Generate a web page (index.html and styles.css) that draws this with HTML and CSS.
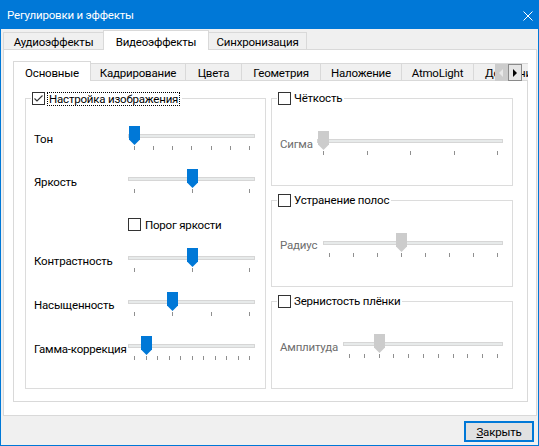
FILE: index.html
```html
<!DOCTYPE html>
<html lang="ru">
<head>
<meta charset="utf-8">
<title>Регулировки и эффекты</title>
<link rel="stylesheet" href="styles.css">
</head>
<body>
<div class="window">
  <div class="titlebar">
    <span class="title">Регулировки и эффекты</span>
    <svg class="close" width="10" height="10" viewBox="0 0 10 10"><path d="M0.5 0.5L9.5 9.5M9.5 0.5L0.5 9.5" stroke="#fff" stroke-width="1" fill="none"/></svg>
  </div>
  <div class="client">
    <div class="outer-tabs">
      <div class="tab ot1">Аудиоэффекты</div>
      <div class="tab ot2 active">Видеоэффекты</div>
      <div class="tab ot3">Синхронизация</div>
    </div>
    <div class="outer-panel">
      <div class="inner-strip">
        <div class="inner-tabs">
          <div class="tab it1 active">Основные</div>
          <div class="tab it2">Кадрирование</div>
          <div class="tab it3">Цвета</div>
          <div class="tab it4">Геометрия</div>
          <div class="tab it5">Наложение</div>
          <div class="tab it6">AtmoLight</div>
          <div class="tab it7">Дополнительно</div>
        </div>
        <div class="scroll-btns">
          <div class="sbtn disabled"><svg width="5" height="8" viewBox="0 0 5 8"><path d="M4 0L0 4L4 8Z" fill="#e8e8e8"/></svg></div>
          <div class="sbtn"><svg width="5" height="8" viewBox="0 0 5 8"><path d="M0 0L4 4L0 8Z" fill="#000"/></svg></div>
        </div>
      </div>
      <div class="inner-panel">
        <div class="group left-group">
          <div class="legend">
            <span class="check"><svg width="11" height="11" viewBox="0 0 11 11"><path d="M1.5 5.5L4 8L9.5 2.5" stroke="#333" stroke-width="1.1" fill="none"/></svg></span>
            <span class="focus">Настройка изображения</span>
          </div>
          <div class="row m1">
            <span class="lbl">Тон</span>
            <div class="slider">
              <div class="track"></div>
              <div class="ticks"><i></i><i></i><i></i><i></i><i></i><i></i><i></i></div>
              <svg class="thumb" style="--v:0" width="11" height="19" viewBox="0 0 11 19"><path d="M0 0H11V13.5L5.5 19L0 13.5Z" fill="#0078d7"/></svg>
            </div>
          </div>
          <div class="row m2">
            <span class="lbl">Яркость</span>
            <div class="slider">
              <div class="track"></div>
              <div class="ticks"><i></i><i></i><i></i></div>
              <svg class="thumb" style="--v:0.5" width="11" height="19" viewBox="0 0 11 19"><path d="M0 0H11V13.5L5.5 19L0 13.5Z" fill="#0078d7"/></svg>
            </div>
          </div>
          <div class="row chk-row">
            <span class="check"></span>
            <span>Порог яркости</span>
          </div>
          <div class="row m4">
            <span class="lbl">Контрастность</span>
            <div class="slider">
              <div class="track"></div>
              <div class="ticks"><i></i><i></i><i></i></div>
              <svg class="thumb" style="--v:0.5" width="11" height="19" viewBox="0 0 11 19"><path d="M0 0H11V13.5L5.5 19L0 13.5Z" fill="#0078d7"/></svg>
            </div>
          </div>
          <div class="row m5">
            <span class="lbl">Насыщенность</span>
            <div class="slider">
              <div class="track"></div>
              <div class="ticks"><i></i><i></i><i></i><i></i></div>
              <svg class="thumb" style="--v:0.333" width="11" height="19" viewBox="0 0 11 19"><path d="M0 0H11V13.5L5.5 19L0 13.5Z" fill="#0078d7"/></svg>
            </div>
          </div>
          <div class="row m5">
            <span class="lbl">Гамма-коррекция</span>
            <div class="slider">
              <div class="track"></div>
              <div class="ticks"><i></i><i></i><i></i><i></i><i></i><i></i><i></i><i></i><i></i><i></i><i></i></div>
              <svg class="thumb" style="--v:0.1" width="11" height="19" viewBox="0 0 11 19"><path d="M0 0H11V13.5L5.5 19L0 13.5Z" fill="#0078d7"/></svg>
            </div>
          </div>
        </div>
        <div class="right-col">
          <div class="group right-group">
            <div class="legend">
              <span class="check"></span>
              <span class="plain">Чёткость</span>
            </div>
            <div class="row rm">
              <span class="lbl dis w-sigma">Сигма</span>
              <div class="slider">
                <div class="track"></div>
                <div class="ticks"><i></i><i></i><i></i><i></i><i></i></div>
                <svg class="thumb" style="--v:0" width="11" height="19" viewBox="0 0 11 19"><path d="M0 0H11V13.5L5.5 19L0 13.5Z" fill="#cccccc"/></svg>
              </div>
            </div>
          </div>
          <div class="group right-group">
            <div class="legend">
              <span class="check"></span>
              <span class="plain">Устранение полос</span>
            </div>
            <div class="row rm">
              <span class="lbl dis w-rad">Радиус</span>
              <div class="slider">
                <div class="track"></div>
                <div class="ticks"><i></i><i></i><i></i><i></i><i></i><i></i><i></i><i></i></div>
                <svg class="thumb" style="--v:0.4286" width="11" height="19" viewBox="0 0 11 19"><path d="M0 0H11V13.5L5.5 19L0 13.5Z" fill="#cccccc"/></svg>
              </div>
            </div>
          </div>
          <div class="group right-group">
            <div class="legend">
              <span class="check"></span>
              <span class="plain">Зернистость плёнки</span>
            </div>
            <div class="row rm">
              <span class="lbl dis w-amp">Амплитуда</span>
              <div class="slider">
                <div class="track"></div>
                <div class="ticks"><i></i><i></i><i></i><i></i><i></i><i></i><i></i><i></i><i></i><i></i><i></i></div>
                <svg class="thumb" style="--v:0.2" width="11" height="19" viewBox="0 0 11 19"><path d="M0 0H11V13.5L5.5 19L0 13.5Z" fill="#cccccc"/></svg>
              </div>
            </div>
          </div>
        </div>
      </div>
    </div>
    <div class="footer">
      <button class="btn"><u>З</u>акрыть</button>
    </div>
  </div>
</div>
</body>
</html>
```
FILE: styles.css
```css
* { box-sizing: border-box; }
html, body { margin: 0; padding: 0; }
body {
  width: 539px;
  height: 446px;
  overflow: hidden;
  font-family: Roboto, "Noto Sans", sans-serif;
  font-size: 11.5px;
  letter-spacing: -0.2px;
  color: #000;
  background: #fff;
}
.window {
  width: 539px;
  height: 446px;
  border: 1px solid #0078d7;
  background: #f0f0f0;
  display: flex;
  flex-direction: column;
}
.titlebar {
  height: 28px;
  flex: none;
  background: #0078d7;
  color: #fff;
  display: flex;
  align-items: center;
  justify-content: space-between;
  padding: 0 5px 0 6px;
}
.title { font-size: 11.5px; }
.close { display: block; margin-top: 1px; }

.client {
  flex: 1;
  display: flex;
  flex-direction: column;
  padding: 1px 1px 0 2px;
}

.outer-tabs {
  display: flex;
  align-items: flex-end;
  height: 19px;
  flex: none;
}
.tab {
  flex: none;
  height: 17px;
  border: 1px solid #d9d9d9;
  border-bottom: none;
  background: #f0f0f0;
  display: flex;
  align-items: center;
  justify-content: center;
  padding-top: 2px;
  white-space: nowrap;
  margin-left: -1px;
}
.tab:first-child { margin-left: 0; }
.tab.active {
  height: 20px;
  margin-bottom: -1px;
  background: #fff;
  position: relative;
  z-index: 2;
}
.ot1 { width: 101px; }
.ot2 { width: 106px; }
.ot3 { width: 99px; }

.outer-panel {
  height: 367px;
  flex: none;
  border: 1px solid #d9d9d9;
  background: #fff;
  display: flex;
  flex-direction: column;
  padding: 11px 8px 13px 9px;
}

.inner-strip {
  position: relative;
  z-index: 2;
  height: 20px;
  margin-bottom: -1px;
  flex: none;
}
.inner-tabs {
  display: flex;
  align-items: flex-end;
  height: 20px;
  overflow: hidden;
}
.inner-tabs .tab { margin-bottom: 1px; }
.inner-tabs .tab.active { margin-bottom: 0; }
.it1 { width: 78px; }
.it2 { width: 96px; }
.it3 { width: 57px; }
.it4 { width: 80px; }
.it5 { width: 82px; }
.it6 { width: 73px; }
.it7 { width: 98px; justify-content: flex-start !important; padding-left: 11px; }

.scroll-btns {
  position: absolute;
  left: 482px;
  top: 3px;
  display: flex;
}
.sbtn {
  width: 14px;
  height: 17px;
  display: flex;
  align-items: center;
  justify-content: center;
  background: #e5e5e5;
  border: 1px solid #8a8a8a;
}
.sbtn.disabled {
  width: 13px;
  background: #cccccc;
  border-color: #cccccc;
}

.inner-panel {
  flex: 1;
  border: 1px solid #d9d9d9;
  display: flex;
  padding: 17px 12px 12px 11px;
}

.group {
  border: 1px solid #dcdcdc;
  display: flex;
  flex-direction: column;
}
.left-group { width: 241px; padding: 0 10px 0 8px; }
.right-col {
  width: 242px;
  margin-left: 5px;
  display: flex;
  flex-direction: column;
  gap: 14px;
}
.right-group { flex: 1; padding: 0 9px 0 8px; }

.legend {
  display: flex;
  align-items: center;
  gap: 3px;
  height: 13px;
  margin: -7px 0 0 -3px;
  padding: 0 2px 0 1px;
  background: #fff;
  align-self: flex-start;
}
.check {
  width: 13px;
  height: 13px;
  flex: none;
  border: 1px solid #333;
  background: #fff;
  display: block;
}
.check svg { display: block; }
.focus {
  border: 1px dotted #000;
  height: 14px;
  line-height: 12px;
  padding: 0 1px;
  margin-left: -1px;
}
.plain { line-height: 13px; }

.row { display: flex; align-items: center; }
.lbl { flex: none; width: 94px; white-space: nowrap; }
.dis { color: #6d6d6d; }
.w-sigma { width: 37px; }
.w-rad { width: 43px; }
.w-amp { width: 63px; }

.m1 { margin-top: 21px; }
.m2 { margin-top: 18px; }
.chk-row { margin-top: 24px; padding-left: 94px; height: 13px; gap: 4px; }
.m4 { margin-top: 17px; }
.m5 { margin-top: 19px; }
.rm { margin-top: 26px; }

.slider {
  position: relative;
  flex: 1;
  height: 25px;
}
.track {
  margin-top: 8px;
  height: 4px;
  background: #e7eaea;
  border: 1px solid #d6d6d6;
}
.ticks {
  display: flex;
  justify-content: space-between;
  margin-top: 8px;
  height: 4px;
  padding: 0 5px 0 6px;
}
.ticks i {
  display: block;
  width: 1px;
  height: 4px;
  background: #8f8f8f;
}
.thumb {
  position: absolute;
  top: 0;
  left: calc(1px + (100% - 12px) * var(--v));
  display: block;
}

.footer {
  flex: 1;
  display: flex;
  justify-content: flex-end;
  align-items: flex-start;
  padding: 5px 3px 0 0;
}
.btn {
  width: 70px;
  height: 21px;
  border: 2px solid #0078d7;
  background: #e1e1e1;
  font-family: Roboto, "Noto Sans", sans-serif;
  font-size: 11.5px;
  letter-spacing: -0.2px;
  color: #000;
  padding: 0;
  margin: 0;
}
.btn u { text-decoration: underline; }
```
